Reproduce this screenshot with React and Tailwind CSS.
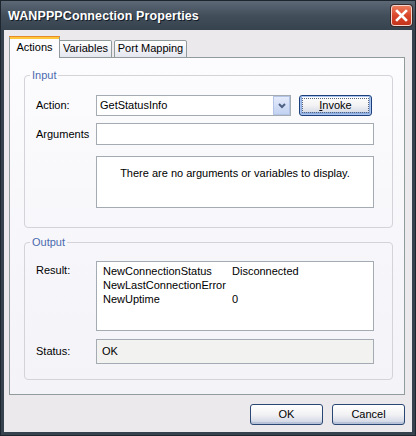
import React from "react";

function CloseButton() {
  return (
    <div className="w-[21px] h-[21px] rounded-[3px] border border-[#f3d6cf] bg-gradient-to-b from-[#ec7b5c] via-[#d9462a] to-[#c5331b] flex items-center justify-center shadow-[0_0_0_1px_#3a2a2a]">
      <svg width="13" height="13" viewBox="0 0 13 13">
        <path d="M2 2 L11 11 M11 2 L2 11" stroke="#ffffff" strokeWidth="2.6" strokeLinecap="square" />
      </svg>
    </div>
  );
}

function Chevron() {
  return (
    <svg width="8" height="6" viewBox="0 0 8 6">
      <path d="M1 1 L4 4 L7 1" stroke="#4d6185" strokeWidth="2" fill="none" />
    </svg>
  );
}

function PushButton({ children, isDefault }) {
  return (
    <div
      className={
        "w-[73px] h-[21px] rounded-[3px] border flex items-center justify-center bg-gradient-to-b from-[#ffffff] via-[#f2f2f4] to-[#ccd3e2] " +
        (isDefault
          ? "border-[#1b3f7a] shadow-[inset_0_0_0_1px_#a9c3ee,inset_0_-1px_0_2px_#8eaee3]"
          : "border-[#2a4773] shadow-[inset_0_-2px_0_#b7c3d9]")
      }
    >
      {children}
    </div>
  );
}

function GroupBox({ title, className, bodyClassName, children }) {
  return (
    <fieldset className={"border border-[#d3d3d8] rounded-[4px] " + (className || "")}>
      <legend className="ml-[5px] px-[2px] leading-[13px] text-[#4b6aae]">{title}</legend>
      <div className={bodyClassName}>{children}</div>
    </fieldset>
  );
}

function Label({ children, className }) {
  return <div className={"w-[60px] shrink-0 " + (className || "")}>{children}</div>;
}

export default function App() {
  const results = [
    ["NewConnectionStatus", "Disconnected"],
    ["NewLastConnectionError", ""],
    ["NewUptime", "0"],
  ];

  return (
    <div className="w-[416px] h-[436px] flex flex-col bg-[#37424f] border border-[#1d252e] font-['Liberation_Sans',Arial,sans-serif] text-[11px] leading-[13px] text-black">
      {/* caption */}
      <div className="h-[29px] shrink-0 flex items-center pl-[7px] pr-[3px] bg-gradient-to-b from-[#5d6876] via-[#434e5b] to-[#37424f]">
        <span className="flex-1 pt-[2px] text-white font-bold text-[12.5px] tracking-[0.1px] [text-shadow:1px_1px_0_#121a24]">
          WANPPPConnection Properties
        </span>
        <CloseButton />
      </div>

      {/* client area */}
      <div className="flex-1 mx-[3px] mb-[3px] bg-[#ece9ec] flex flex-col pt-[6px] pl-[5px] pr-[7px]">
        {/* tabs */}
        <div className="h-[22px] flex items-end">
          <div className="relative z-10 w-[51px] h-[22px] bg-[#fcfcfe] border-x border-[#919b9c] flex flex-col">
            <div className="h-[1px] bg-[#e68b2c] -mx-[1px]" />
            <div className="h-[2px] bg-[#ffc83c]" />
            <div className="flex-1 flex items-center justify-center pb-[2px]">Actions</div>
          </div>
          <div className="w-[52px] h-[18px] border border-[#919b9c] border-l-0 rounded-tr-[2px] bg-gradient-to-b from-[#ffffff] to-[#e5e7ef] flex items-center justify-center pb-[1px]">
            Variables
          </div>
          <div className="ml-[2px] w-[73px] h-[18px] border border-[#919b9c] rounded-t-[2px] bg-gradient-to-b from-[#ffffff] to-[#e5e7ef] flex items-center justify-center pb-[1px]">
            Port Mapping
          </div>
        </div>

        {/* tab page */}
        <div className="-mt-[1px] h-[338px] border border-[#919b9c] bg-gradient-to-b from-[#fcfcfe] to-[#f3f3f8] pt-[11px] pl-[14px] pr-[11px] flex flex-col">
          <GroupBox title="Input" bodyClassName="pt-[13px] pl-[11px] pr-[18px] pb-[19px]">
            <div className="flex items-center h-[21px]">
              <Label>Action:</Label>
              <div className="w-[195px] h-[21px] border border-[#a5abb3] bg-white flex items-center">
                <span className="flex-1 pl-[3px]">GetStatusInfo</span>
                <div className="w-[17px] h-[19px] border border-[#b4c4e6] bg-gradient-to-b from-[#e4ebfb] to-[#c3d2f2] flex items-center justify-center">
                  <Chevron />
                </div>
              </div>
              <div className="ml-[8px]">
                <PushButton isDefault>
                  <div className="w-[65px] h-[13px] outline outline-1 outline-dotted outline-[#5a6478] flex items-center justify-center">
                    <span>
                      <span className="underline">I</span>nvoke
                    </span>
                  </div>
                </PushButton>
              </div>
            </div>
            <div className="flex items-center mt-[7px]">
              <Label>Arguments</Label>
              <div className="w-[278px] h-[22px] border border-[#a5abb3] bg-white" />
            </div>
            <div className="flex mt-[11px]">
              <Label />
              <div className="w-[278px] h-[52px] border border-[#a5abb3] bg-white pt-[10px] text-center">
                There are no arguments or variables to display.
              </div>
            </div>
          </GroupBox>

          <GroupBox title="Output" className="mt-[8px]" bodyClassName="pt-[12px] pl-[11px] pr-[18px] pb-[15px]">
            <div className="flex">
              <Label className="pt-[3px]">Result:</Label>
              <div className="w-[278px] h-[70px] border border-[#a5abb3] bg-white pt-[2px] pl-[6px]">
                {results.map(([name, value]) => (
                  <div key={name} className="flex leading-[14px]">
                    <span className="w-[129px] shrink-0">{name}</span>
                    <span>{value}</span>
                  </div>
                ))}
              </div>
            </div>
            <div className="flex items-center mt-[8px]">
              <Label>Status:</Label>
              <div className="w-[278px] h-[25px] border border-[#a5abb3] bg-[#f2f2f0] flex items-center pl-[5px]">OK</div>
            </div>
          </GroupBox>
        </div>

        {/* dialog buttons */}
        <div className="mt-[9px] flex justify-end gap-[9px]">
          <PushButton>OK</PushButton>
          <PushButton>Cancel</PushButton>
        </div>
      </div>
    </div>
  );
}
